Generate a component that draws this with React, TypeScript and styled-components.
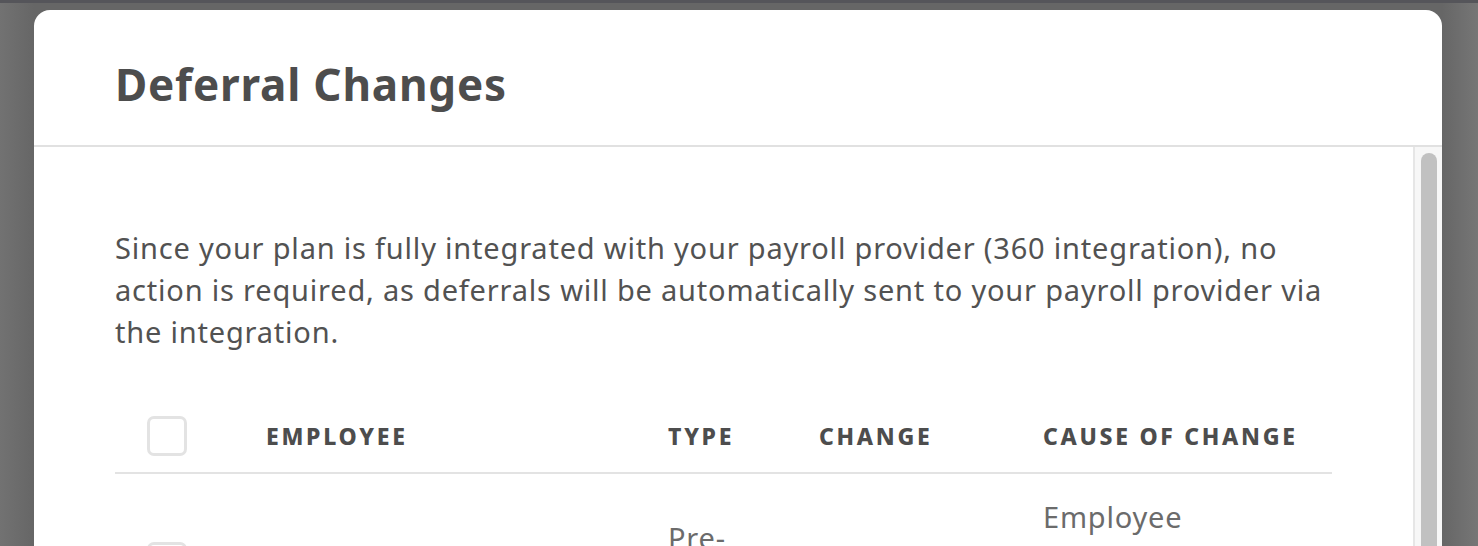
import React from "react";
import styled, { createGlobalStyle } from "styled-components";

const Global = createGlobalStyle`
  html, body {
    margin: 0;
    padding: 0;
    height: 546px;
    overflow: hidden;
    background: #6b6b6b;
  }
  * { box-sizing: border-box; }
`;

const Backdrop = styled.div`
  position: relative;
  width: 1478px;
  height: 546px;
  overflow: hidden;
  background: linear-gradient(90deg, #727272 0px, #666666 34px, #666666 1442px, #767676 1478px);
  border-top: 3px solid #55555a;
  padding: 7px 36px 0 34px;
  font-family: "Noto Sans", "Open Sans", sans-serif;
`;

const Modal = styled.div`
  width: 1408px;
  height: 600px;
  background: #ffffff;
  border-radius: 16px 16px 0 0;
  display: flex;
  flex-direction: column;
`;

const Header = styled.div`
  height: 137px;
  flex: 0 0 auto;
  border-bottom: 2px solid #e1e1e1;
  padding: 45px 0 0 81px;
`;

const Title = styled.h1`
  margin: 0;
  font-size: 44px;
  line-height: 58px;
  font-weight: 700;
  color: #4d4d4d;
  letter-spacing: 0.8px;
`;

const BodyWrap = styled.div`
  flex: 1;
  display: flex;
`;

const Content = styled.div`
  flex: 1;
  padding: 80px 0 0 81px;
  width: 1298px;
`;

const Intro = styled.p`
  margin: 0;
  width: 1217px;
  font-size: 29px;
  line-height: 42px;
  letter-spacing: 0.8px;
  color: #525252;
`;

const Table = styled.div`
  margin-top: 46px;
  width: 1217px;
`;

const Row = styled.div<{ $head?: boolean }>`
  display: grid;
  grid-template-columns: 119px 402px 151px 224px 321px;
  align-items: center;
  border-bottom: ${(p) => (p.$head ? "2px solid #e3e3e3" : "1px solid #eeeeee")};
  padding: ${(p) => (p.$head ? "17px 0 16px" : "22px 0")};
`;

const Cell = styled.div`
  padding: 0 32px;
`;

const HeadLabel = styled.span`
  font-size: 23px;
  font-weight: 800;
  letter-spacing: 2.7px;
  color: #4d4d4d;
  line-height: 40px;
  white-space: nowrap;
`;

const CellText = styled.div`
  font-size: 29px;
  line-height: 42px;
  letter-spacing: 0.8px;
  color: #6b6b6b;
`;

const Check = styled.div<{ $row?: boolean }>`
  width: 40px;
  height: 40px;
  border: 3px solid #e3e3e3;
  border-radius: 7px;
  background: #fff;
  margin-top: ${(p) => (p.$row ? "5px" : "0")};
`;

const Track = styled.div`
  width: 29px;
  flex: 0 0 29px;
  background: #f7f7f7;
  border-left: 2px solid #e6e6e6;
  padding: 6px 6px 0 6px;
`;

const Thumb = styled.div`
  width: 16px;
  height: 560px;
  background: #c1c1c1;
  border-radius: 8px;
`;

export default function App() {
  return (
    <>
      <Global />
      <Backdrop>
        <Modal>
          <Header>
            <Title>Deferral Changes</Title>
          </Header>
          <BodyWrap>
            <Content>
              <Intro>
                Since your plan is fully integrated with your payroll provider (360 integration), no
                action is required, as deferrals will be automatically sent to your payroll provider via
                the integration.
              </Intro>
              <Table>
                <Row $head>
                  <Cell>
                    <Check />
                  </Cell>
                  <Cell>
                    <HeadLabel>EMPLOYEE</HeadLabel>
                  </Cell>
                  <Cell>
                    <HeadLabel>TYPE</HeadLabel>
                  </Cell>
                  <Cell>
                    <HeadLabel>CHANGE</HeadLabel>
                  </Cell>
                  <Cell>
                    <HeadLabel>CAUSE OF CHANGE</HeadLabel>
                  </Cell>
                </Row>
                <Row>
                  <Cell>
                    <Check $row />
                  </Cell>
                  <Cell>
                    <CellText>Jordan Ellis</CellText>
                  </Cell>
                  <Cell>
                    <CellText>Pre-tax</CellText>
                  </Cell>
                  <Cell>
                    <CellText>6% → 8%</CellText>
                  </Cell>
                  <Cell>
                    <CellText>Employee enrollment change</CellText>
                  </Cell>
                </Row>
              </Table>
            </Content>
            <Track>
              <Thumb />
            </Track>
          </BodyWrap>
        </Modal>
      </Backdrop>
    </>
  );
}
